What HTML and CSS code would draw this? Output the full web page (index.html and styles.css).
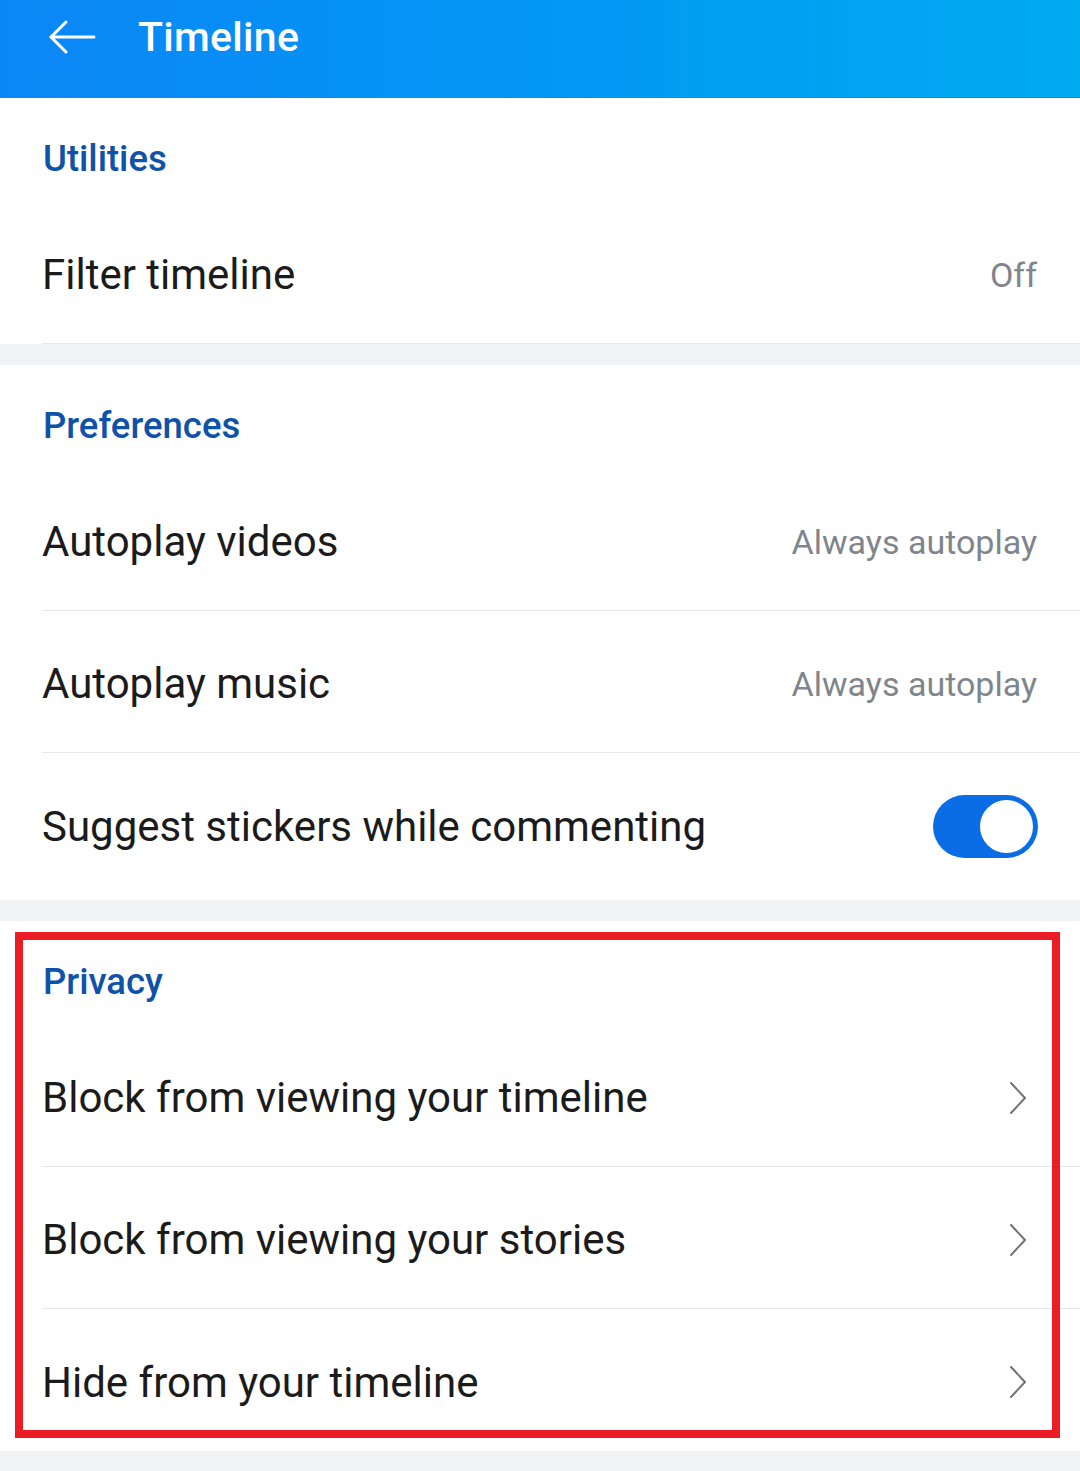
FILE: index.html
```html
<!DOCTYPE html>
<html lang="en">
<head>
    <meta charset="UTF-8">
    <meta name="viewport" content="width=device-width, initial-scale=1.0">
    <title>Timeline</title>
    <link rel="stylesheet" href="styles.css">
</head>
<body>
    <!-- Top bar -->
    <header class="app-bar">
        <button class="back-button" aria-label="Back">
            <svg width="48" height="36" viewBox="0 0 48 36" fill="none" stroke="#ffffff" stroke-width="3" stroke-linecap="round" stroke-linejoin="round">
                <path d="M46 17H3"/>
                <path d="M18 2L3 17L18 32"/>
            </svg>
        </button>
        <h1 class="app-title">Timeline</h1>
    </header>

    <!-- Utilities -->
    <section class="settings-group">
        <h2 class="group-title">Utilities</h2>
        <div class="setting-row has-divider">
            <span class="setting-label">Filter timeline</span>
            <span class="setting-value">Off</span>
        </div>
    </section>

    <!-- Preferences -->
    <section class="settings-group">
        <h2 class="group-title">Preferences</h2>
        <div class="setting-row has-divider">
            <span class="setting-label">Autoplay videos</span>
            <span class="setting-value">Always autoplay</span>
        </div>
        <div class="setting-row has-divider">
            <span class="setting-label">Autoplay music</span>
            <span class="setting-value">Always autoplay</span>
        </div>
        <div class="setting-row tall">
            <span class="setting-label">Suggest stickers while commenting</span>
            <span class="toggle on"><span class="toggle-knob"></span></span>
        </div>
    </section>

    <!-- Privacy -->
    <section class="settings-group highlighted">
        <h2 class="group-title">Privacy</h2>
        <div class="setting-row has-divider">
            <span class="setting-label">Block from viewing your timeline</span>
            <svg class="chevron" width="18" height="32" viewBox="0 0 18 32" fill="none" stroke="#6f7277" stroke-width="2" stroke-linecap="round" stroke-linejoin="round"><path d="M2 1L16 16L2 31"/></svg>
        </div>
        <div class="setting-row has-divider">
            <span class="setting-label">Block from viewing your stories</span>
            <svg class="chevron" width="18" height="32" viewBox="0 0 18 32" fill="none" stroke="#6f7277" stroke-width="2" stroke-linecap="round" stroke-linejoin="round"><path d="M2 1L16 16L2 31"/></svg>
        </div>
        <div class="setting-row">
            <span class="setting-label">Hide from your timeline</span>
            <svg class="chevron" width="18" height="32" viewBox="0 0 18 32" fill="none" stroke="#6f7277" stroke-width="2" stroke-linecap="round" stroke-linejoin="round"><path d="M2 1L16 16L2 31"/></svg>
        </div>
    </section>
</body>
</html>
```

FILE: styles.css
```css
* {
    box-sizing: border-box;
    margin: 0;
    padding: 0;
    font-family: Roboto, 'Noto Sans', 'Liberation Sans', sans-serif;
}

body {
    background-color: #f2f3f5;
    color: #1b1b1b;
    width: 1080px;
    min-height: 1471px;
}

.app-bar {
    height: 98px;
    display: flex;
    align-items: center;
    padding: 0 0 22px 48px;
    background: linear-gradient(90deg, #0b86f6 0%, #0299f4 55%, #01abf0 100%);
    border-bottom: 1px solid #0a8fd8;
}

.back-button {
    background: none;
    border: none;
    width: 48px;
    height: 36px;
    display: flex;
    align-items: center;
    cursor: pointer;
}

.app-title {
    margin-left: 42px;
    font-size: 41px;
    font-weight: 500;
    color: #ffffff;
    letter-spacing: 0.3px;
    margin-top: -2px;
}

.settings-group {
    background-color: #ffffff;
    margin-bottom: 21px;
}

.group-title {
    height: 104px;
    display: flex;
    align-items: center;
    padding: 16px 0 0 43px;
    font-size: 36.5px;
    font-weight: 500;
    color: #0f52a9;
}

.setting-row {
    height: 142px;
    display: flex;
    align-items: center;
    justify-content: space-between;
    margin-left: 42px;
    padding-right: 43px;
    padding-top: 4px;
}

.setting-row.tall {
    height: 147px;
    padding-top: 0;
}

.has-divider {
    border-bottom: 1px solid #e6e7e9;
}

.setting-label {
    font-size: 42px;
    color: #1b1b1b;
}

.setting-value {
    font-size: 34px;
    color: #7f858c;
}

.toggle {
    width: 105px;
    height: 63px;
    border-radius: 32px;
    background-color: #0a6de6;
    display: flex;
    align-items: center;
    justify-content: flex-end;
    padding: 5px;
    margin-right: -1px;
}

.toggle-knob {
    width: 53px;
    height: 53px;
    border-radius: 50%;
    background-color: #ffffff;
}

.chevron {
    margin-right: 10px;
}

.highlighted {
    position: relative;
}

/* red annotation frame drawn over the privacy block */
.highlighted::after {
    content: "";
    position: absolute;
    top: 11px;
    left: 15px;
    right: 20px;
    bottom: 13px;
    border: 8px solid #ec1c24;
    pointer-events: none;
}
```
